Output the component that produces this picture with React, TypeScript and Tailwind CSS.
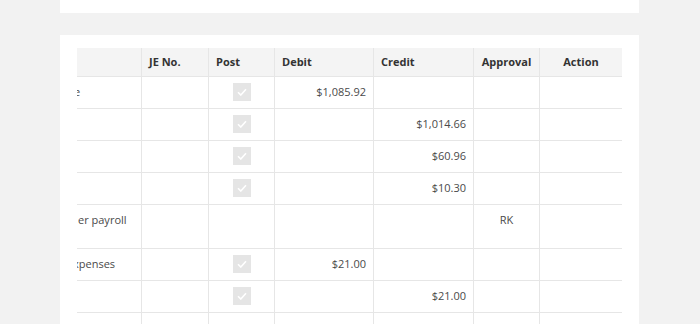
import React from 'react';

type Row = {
    desc: string;
    descShift: string;
    post: boolean;
    debit?: string;
    credit?: string;
    approval?: string;
    tall?: boolean;
};

const rows: Row[] = [
    { desc: 'e', descShift: '-ml-[4px]', post: true, debit: '$1,085.92' },
    { desc: '', descShift: '', post: true, credit: '$1,014.66' },
    { desc: '', descShift: '', post: true, credit: '$60.96' },
    { desc: '', descShift: '', post: true, credit: '$10.30' },
    { desc: 'er payroll', descShift: 'ml-0', post: false, approval: 'RK', tall: true },
    { desc: 'xpenses', descShift: '-ml-[5px]', post: true, debit: '$21.00' },
    { desc: '', descShift: '', post: true, credit: '$21.00' },
    { desc: 'ravel', descShift: '-ml-[2px]', post: false, approval: 'SH' },
];

const CheckBox: React.FC = () => (
    <div className="mx-auto w-[18px] h-[18px] bg-[#e5e5e5] flex items-center justify-center">
        <svg width="10" height="8" viewBox="0 0 10 8" fill="none">
            <path d="M1 4.2 L3.8 7 L9 1.2" stroke="#ffffff" strokeWidth="1.6" />
        </svg>
    </div>
);

const App: React.FC = () => {
    const cell = 'border border-[#e6e6e6] align-top px-[7px]';

    return (
        <div className="min-h-screen bg-[#f2f2f2] font-['Open_Sans',sans-serif] text-[11px] text-[#4a4a4a]">
            <div className="ml-[60px] w-[579px] h-[13px] bg-white" />
            <div className="ml-[60px] w-[579px] mt-[22px] bg-white pl-[17px] pr-[17px] pt-[13px] h-[300px]">
                <div className="overflow-hidden">
                    <table className="table-fixed border-collapse w-[546px] -ml-px">
                        <colgroup>
                            <col className="w-[65px]" />
                            <col className="w-[67px]" />
                            <col className="w-[66px]" />
                            <col className="w-[99px]" />
                            <col className="w-[100px]" />
                            <col className="w-[66px]" />
                            <col className="w-[83px]" />
                        </colgroup>
                        <thead>
                            <tr className="bg-[#f4f4f4] text-[#333] font-bold h-[28px]">
                                <th className={`${cell} border-t-0`}></th>
                                <th className={`${cell} border-t-0 text-left pt-[6px]`}>JE No.</th>
                                <th className={`${cell} border-t-0 text-left pt-[6px]`}>Post</th>
                                <th className={`${cell} border-t-0 text-left pt-[6px]`}>Debit</th>
                                <th className={`${cell} border-t-0 text-left pt-[6px]`}>Credit</th>
                                <th className={`${cell} border-t-0 text-center pt-[6px]`}>Approval</th>
                                <th className={`${cell} border-t-0 text-center pt-[6px]`}>Action</th>
                            </tr>
                        </thead>
                        <tbody>
                            {rows.map((row, i) => (
                                <tr key={i} className={row.tall ? 'h-[44px]' : 'h-[32px]'}>
                                    <td className={`${cell} pt-[7px] pl-px overflow-hidden whitespace-nowrap`}>
                                        <span className={`block ${row.descShift}`}>{row.desc}</span>
                                    </td>
                                    <td className={cell}></td>
                                    <td className={`${cell} pt-[6px]`}>{row.post && <CheckBox />}</td>
                                    <td className={`${cell} pt-[7px] text-right`}>{row.debit}</td>
                                    <td className={`${cell} pt-[7px] text-right`}>{row.credit}</td>
                                    <td className={`${cell} pt-[7px] text-center`}>{row.approval}</td>
                                    <td className={cell}></td>
                                </tr>
                            ))}
                        </tbody>
                    </table>
                </div>
            </div>
        </div>
    );
};

export default App;
